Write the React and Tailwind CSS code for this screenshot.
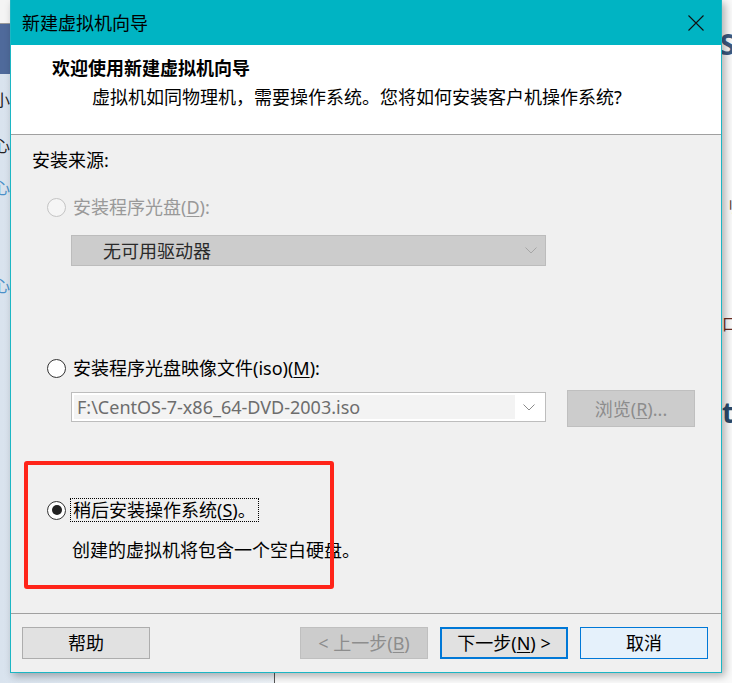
// 新建虚拟机向导 - 安装来源
const font = { fontFamily: '"Noto Sans", "Noto Sans CJK SC", sans-serif' };

function Radio({ checked, disabled }) {
	return (
		<span
			className={`w-[19px] h-[19px] rounded-full border flex items-center justify-center shrink-0 ${
				disabled ? 'border-[#c4c4c4] bg-[#f5f5f5]' : 'border-[#333333] bg-white'
			}`}
		>
			{checked && <span className="w-[10px] h-[10px] rounded-full bg-[#222222]" />}
		</span>
	);
}

function Chevron({ color }) {
	return (
		<svg width="12" height="7" viewBox="0 0 12 7" fill="none">
			<path d="M0.5 0.5 L6 6 L11.5 0.5" stroke={color} strokeWidth="1" />
		</svg>
	);
}

function Btn({ children, variant }) {
	const styles = {
		normal: 'border border-[#adadad] bg-[#e1e1e1] text-black',
		disabled: 'border border-[#bfbfbf] bg-[#cccccc] text-[#8d8d8d]',
		focus: 'border-2 border-[#0078d7] bg-[#e1e1e1] text-black',
		hover: 'border border-[#0078d7] bg-[#e5f1fb] text-black',
	};
	return (
		<div className={`w-[128px] h-[32px] flex items-center justify-center text-[18px] leading-none ${styles[variant]}`}>
			{children}
		</div>
	);
}

export default function App() {
	return (
		<div className="relative w-[732px] h-[683px] overflow-hidden bg-[#f3f3f3] text-black" style={font}>
			{/* BACKDROP (other app behind the dialog) */}
			<div className="flex w-full h-full">
				<div className="w-[275px] h-full flex flex-col border-r border-[#555555] bg-gradient-to-r from-[#d9e3ee] to-[#eef3f8]">
					<div className="h-[24px] bg-[#f4f4f4] border-b border-[#9a9a9a]" />
					<div className="h-[50px] bg-[#4f6a9b]" />
					<div className="flex flex-col text-[16px] leading-none -ml-[6px]">
						<span className="mt-[18px] text-[#222]">小F</span>
						<span className="mt-[30px] text-[#222]">心</span>
						<span className="mt-[26px] text-[#4a90c8]">心</span>
						<span className="mt-[82px] text-[#4a90c8]">心</span>
					</div>
				</div>
				<div className="flex-1 h-full bg-[#fafafa] flex justify-end">
					<div className="w-[10px] flex flex-col whitespace-nowrap">
						<span className="mt-[30px] text-[28px] leading-none font-bold text-[#3d5a80] -ml-[2px]">S</span>
						<span className="mt-[140px] text-[16px] leading-none text-[#5a4030]">刂历</span>
						<span className="mt-[102px] text-[16px] leading-none text-[#6a2a20]">口至</span>
						<span className="mt-[66px] text-[28px] leading-none font-bold text-[#2c4a6a]">ti</span>
					</div>
				</div>
			</div>

			{/* DIALOG WINDOW */}
			<div className="absolute left-[10px] top-0 w-[712px] h-[673px] flex flex-col bg-[#f0f0f0] border border-[#1cb6c4] border-t-0 shadow-[3px_3px_8px_rgba(0,0,0,0.3)]">
				{/* title bar */}
				<div className="h-[45px] bg-[#00b4c3] flex items-center justify-between pl-[11px] pr-[17px] shrink-0">
					<span className="text-[18px] leading-none">新建虚拟机向导</span>
					<svg width="16" height="16" viewBox="0 0 16 16" fill="none">
						<path d="M0.5 0.5 L15.5 15.5 M15.5 0.5 L0.5 15.5" stroke="#111" strokeWidth="1.1" />
					</svg>
				</div>

				{/* header */}
				<div className="h-[90px] bg-white border-b border-[#a0a0a0] flex flex-col pl-[41px] pt-[11px] shrink-0">
					<span className="text-[18px] leading-[24px] font-bold">欢迎使用新建虚拟机向导</span>
					<span className="text-[18px] leading-[24px] mt-[5px] pl-[40px]">虚拟机如同物理机，需要操作系统。您将如何安装客户机操作系统?</span>
				</div>

				{/* body */}
				<div className="h-[478px] flex flex-col pt-[13px] shrink-0 text-[18px] leading-[24px]">
					<span className="pl-[21px] h-[24px]">安装来源:</span>

					<div className="mt-[23px] pl-[36px] flex items-center gap-[7px] h-[24px] text-[#999999]">
						<Radio disabled />
						<span>安装程序光盘(<span className="underline underline-offset-2">D</span>):</span>
					</div>

					<div className="mt-[16px] ml-[60px] w-[475px] h-[31px] bg-[#cccccc] border border-[#bcbcbc] flex items-center justify-between pl-[31px] pr-[8px] text-[#2a2a2a]">
						<span>无可用驱动器</span>
						<Chevron color="#a6a6a6" />
					</div>

					<div className="mt-[90px] pl-[36px] flex items-center gap-[7px] h-[24px]">
						<Radio />
						<span>安装程序光盘映像文件(iso)(<span className="underline underline-offset-2">M</span>):</span>
					</div>

					<div className="mt-[10px] ml-[60px] flex items-start h-[37px]">
						<div className="mt-[2px] w-[475px] h-[30px] bg-white border border-[#bdbdbd] flex items-center p-[2px]">
							<div className="flex-1 h-full bg-[#f3f3f3] flex items-center pl-[3px] text-[#6d6d6d] text-[18px]">
								F:\CentOS-7-x86_64-DVD-2003.iso
							</div>
							<div className="w-[28px] flex justify-center">
								<Chevron color="#8a8a8a" />
							</div>
						</div>
						<div className="ml-[21px] w-[128px] h-[37px] bg-[#cccccc] border border-[#bfbfbf] flex items-center justify-center text-[#8d8d8d]">
							浏览(<span className="underline underline-offset-2">R</span>)...
						</div>
					</div>

					<div className="mt-[71px] pl-[36px] flex items-center gap-[4px] h-[24px]">
						<Radio checked />
						<span className="border border-dotted border-black px-[2px] h-[24px] flex items-center">
							稍后安装操作系统(<span className="underline underline-offset-2">S</span>)。
						</span>
					</div>

					<span className="mt-[16px] pl-[61px] h-[24px]">创建的虚拟机将包含一个空白硬盘。</span>
				</div>

				{/* footer */}
				<div className="flex-1 border-t border-[#a0a0a0] flex items-start justify-between pt-[13px] pl-[11px] pr-[13px]">
					<Btn variant="normal">帮助</Btn>
					<div className="flex gap-[12px]">
						<Btn variant="disabled">&lt; 上一步(<span className="underline underline-offset-2">B</span>)</Btn>
						<Btn variant="focus">下一步(<span className="underline underline-offset-2">N</span>) &gt;</Btn>
						<Btn variant="hover">取消</Btn>
					</div>
				</div>
			</div>

			{/* annotation box */}
			<div className="absolute left-[24px] top-[461px] w-[310px] h-[128px] border-[4px] border-[#ff2419] rounded-[3px]" />
		</div>
	);
}
